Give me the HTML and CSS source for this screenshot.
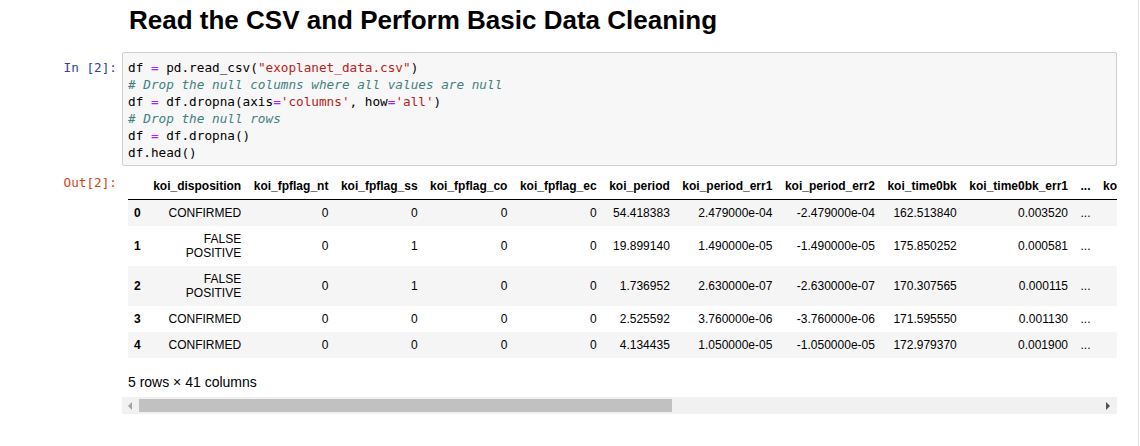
FILE: index.html
```html
<!DOCTYPE html>
<html>
<head>
<meta charset="utf-8">
<title>Notebook</title>
<link rel="stylesheet" href="styles.css">
</head>
<body>
<div class="nb">
  <div class="cell md-cell">
    <div class="prompt"></div>
    <div class="md"><h1>Read the CSV and Perform Basic Data Cleaning</h1></div>
  </div>

  <div class="cell code-cell">
    <div class="prompt in">In [2]:</div>
    <div class="code"><div>df <span class="op">=</span> pd.read_csv(<span class="str">"exoplanet_data.csv"</span>)</div><div class="cm"># Drop the null columns where all values are null</div><div>df <span class="op">=</span> df.dropna(axis<span class="op">=</span><span class="str">'columns'</span>, how<span class="op">=</span><span class="str">'all'</span>)</div><div class="cm"># Drop the null rows</div><div>df <span class="op">=</span> df.dropna()</div><div>df.head()</div></div>
  </div>

  <div class="cell out-cell">
    <div class="prompt out">Out[2]:</div>
    <div class="out-area">
      <div class="scroll-content">
        <table class="df">
          <thead>
            <tr>
              <th></th><th>koi_disposition</th><th>koi_fpflag_nt</th><th>koi_fpflag_ss</th><th>koi_fpflag_co</th><th>koi_fpflag_ec</th><th>koi_period</th><th>koi_period_err1</th><th>koi_period_err2</th><th>koi_time0bk</th><th>koi_time0bk_err1</th><th>...</th><th>koi_steff_err2</th><th>koi_slogg</th><th>koi_slogg_err1</th><th>koi_slogg_err2</th><th>koi_srad</th><th>koi_srad_err1</th><th>koi_srad_err2</th><th>ra</th><th>dec</th><th>koi_kepmag</th>
            </tr>
          </thead>
          <tbody>
            <tr><th>0</th><td>CONFIRMED</td><td>0</td><td>0</td><td>0</td><td>0</td><td>54.418383</td><td>2.479000e-04</td><td>-2.479000e-04</td><td>162.513840</td><td>0.003520</td><td>...</td><td>-81</td><td>4.467</td><td>0.064</td><td>-0.096</td><td>0.927</td><td>0.105</td><td>-0.061</td><td>291.93423</td><td>48.141651</td><td>15.347</td></tr>
            <tr><th>1</th><td>FALSE POSITIVE</td><td>0</td><td>1</td><td>0</td><td>0</td><td>19.899140</td><td>1.490000e-05</td><td>-1.490000e-05</td><td>175.850252</td><td>0.000581</td><td>...</td><td>-176</td><td>4.544</td><td>0.044</td><td>-0.176</td><td>0.868</td><td>0.233</td><td>-0.078</td><td>297.00482</td><td>48.134129</td><td>15.436</td></tr>
            <tr><th>2</th><td>FALSE POSITIVE</td><td>0</td><td>1</td><td>0</td><td>0</td><td>1.736952</td><td>2.630000e-07</td><td>-2.630000e-07</td><td>170.307565</td><td>0.000115</td><td>...</td><td>-174</td><td>4.564</td><td>0.053</td><td>-0.168</td><td>0.791</td><td>0.201</td><td>-0.067</td><td>285.53461</td><td>48.285210</td><td>15.597</td></tr>
            <tr><th>3</th><td>CONFIRMED</td><td>0</td><td>0</td><td>0</td><td>0</td><td>2.525592</td><td>3.760000e-06</td><td>-3.760000e-06</td><td>171.595550</td><td>0.001130</td><td>...</td><td>-211</td><td>4.438</td><td>0.070</td><td>-0.210</td><td>1.046</td><td>0.334</td><td>-0.133</td><td>288.75488</td><td>48.226200</td><td>15.509</td></tr>
            <tr><th>4</th><td>CONFIRMED</td><td>0</td><td>0</td><td>0</td><td>0</td><td>4.134435</td><td>1.050000e-05</td><td>-1.050000e-05</td><td>172.979370</td><td>0.001900</td><td>...</td><td>-232</td><td>4.486</td><td>0.054</td><td>-0.229</td><td>0.972</td><td>0.315</td><td>-0.105</td><td>296.28613</td><td>48.224670</td><td>15.714</td></tr>
          </tbody>
        </table>
        <p class="shape">5 rows × 41 columns</p>
      </div>
      <div class="hscroll">
        <div class="sb-btn"><span class="arrow-left"></span></div>
        <div class="sb-track"><div class="sb-thumb"></div></div>
        <div class="sb-btn"><span class="arrow-right"></span></div>
      </div>
    </div>
  </div>
</div>
</body>
</html>
```
FILE: styles.css
```css
html, body {
  margin: 0;
  padding: 0;
  background: #ffffff;
}

body {
  font-family: "Liberation Sans", Arial, sans-serif;
  color: #000000;
}

.nb {
  width: 1138px;
  height: 446px;
  border-right: 1px solid #e0e0e0;
  overflow: hidden;
}

.cell {
  display: flex;
}

.prompt {
  flex: 0 0 122px;
  box-sizing: border-box;
  padding-right: 5px;
  text-align: right;
  font-family: "DejaVu Sans Mono", "Liberation Mono", monospace;
  font-size: 12.7px;
  line-height: 17px;
  white-space: pre;
}

.prompt.in {
  padding-top: 7px;
  color: #303f9f;
}

.prompt.out {
  padding-top: 1px;
  color: #d84315;
}

.md {
  padding: 5px 0 0 7px;
}

.md h1 {
  margin: 0;
  font-family: "Liberation Sans", Arial, sans-serif;
  font-weight: bold;
  font-size: 26px;
  line-height: 31px;
  color: #000000;
}

.code-cell {
  margin-top: 16px;
}

.code {
  width: 995px;
  box-sizing: border-box;
  border: 1px solid #cfcfcf;
  border-radius: 2px;
  background: #f7f7f7;
  padding: 6px 5px 4px;
  font-family: "DejaVu Sans Mono", "Liberation Mono", monospace;
  font-size: 12.7px;
  line-height: 17px;
  white-space: pre;
  color: #000000;
}

.code .op {
  color: #aa22ff;
}

.code .str {
  color: #ba2121;
}

.code .cm {
  color: #408080;
  font-style: italic;
}

.out-cell {
  padding-top: 7px;
}

.out-area {
  width: 995px;
  overflow: hidden;
}

.scroll-content {
  padding-left: 6px;
}

table.df {
  border-collapse: collapse;
  border-spacing: 0;
  font-size: 12px;
  font-family: "Liberation Sans", Arial, sans-serif;
  color: #000000;
}

table.df th,
table.df td {
  padding: 6px 6.25px;
  text-align: right;
  vertical-align: middle;
  line-height: 14px;
  white-space: normal;
}

table.df th:first-child {
  padding-left: 6px;
}

table.df th {
  font-weight: bold;
}

table.df thead th {
  border-bottom: 1px solid #000000;
}

table.df tbody tr:nth-child(odd) {
  background: #f5f5f5;
}

.shape {
  margin: 16px 0 7px;
  font-size: 14px;
  line-height: 16px;
  white-space: nowrap;
}

.hscroll {
  display: flex;
  height: 17px;
  background: #f1f1f1;
}

.sb-btn {
  flex: 0 0 17px;
  display: flex;
  align-items: center;
  justify-content: center;
}

.arrow-left {
  width: 0;
  height: 0;
  border-top: 4px solid transparent;
  border-bottom: 4px solid transparent;
  border-right: 4px solid #a3a3a3;
  margin-right: 1px;
}

.arrow-right {
  width: 0;
  height: 0;
  border-top: 4px solid transparent;
  border-bottom: 4px solid transparent;
  border-left: 4px solid #505050;
  margin-right: 1px;
}

.sb-track {
  flex: 1 1 auto;
  display: flex;
  align-items: center;
}

.sb-thumb {
  width: 533px;
  height: 13px;
  background: #c1c1c1;
}
```
